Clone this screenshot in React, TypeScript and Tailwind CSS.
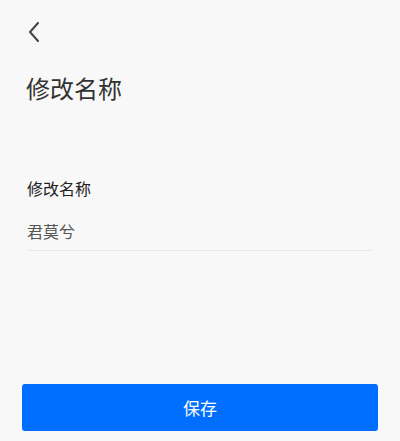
export default function App() {
  return (
    <div
      className="min-h-screen flex flex-col bg-[#f8f8f8]"
      style={{ fontFamily: '"Noto Sans CJK SC", "Noto Sans", sans-serif' }}
    >
      {/* 返回 */}
      <div className="pt-[22px] pl-[29px]">
        <svg width="12" height="20" viewBox="0 0 12 20" fill="none">
          <path
            d="M9 1 L1 10 L9 19"
            stroke="#444"
            strokeWidth="2"
            strokeLinecap="round"
            strokeLinejoin="round"
          />
        </svg>
      </div>

      <h1 className="mt-[32px] px-[26px] text-[24px] leading-[28px] text-[#333]">
        修改名称
      </h1>

      <div className="mt-[76px] px-[27px]">
        <div className="text-[16px] leading-[20px] text-[#222]">修改名称</div>
        <div className="mt-[23px] pb-[9px] border-b border-[#e8e8e8] mr-[1px] text-[16px] leading-[20px] text-[#555]">
          君莫兮
        </div>
      </div>

      <div className="mt-auto px-[22px] pb-[10px]">
        <button className="w-full h-[47px] rounded-[3px] bg-[#006eff] text-white text-[17px]">
          保存
        </button>
      </div>
    </div>
  );
}
